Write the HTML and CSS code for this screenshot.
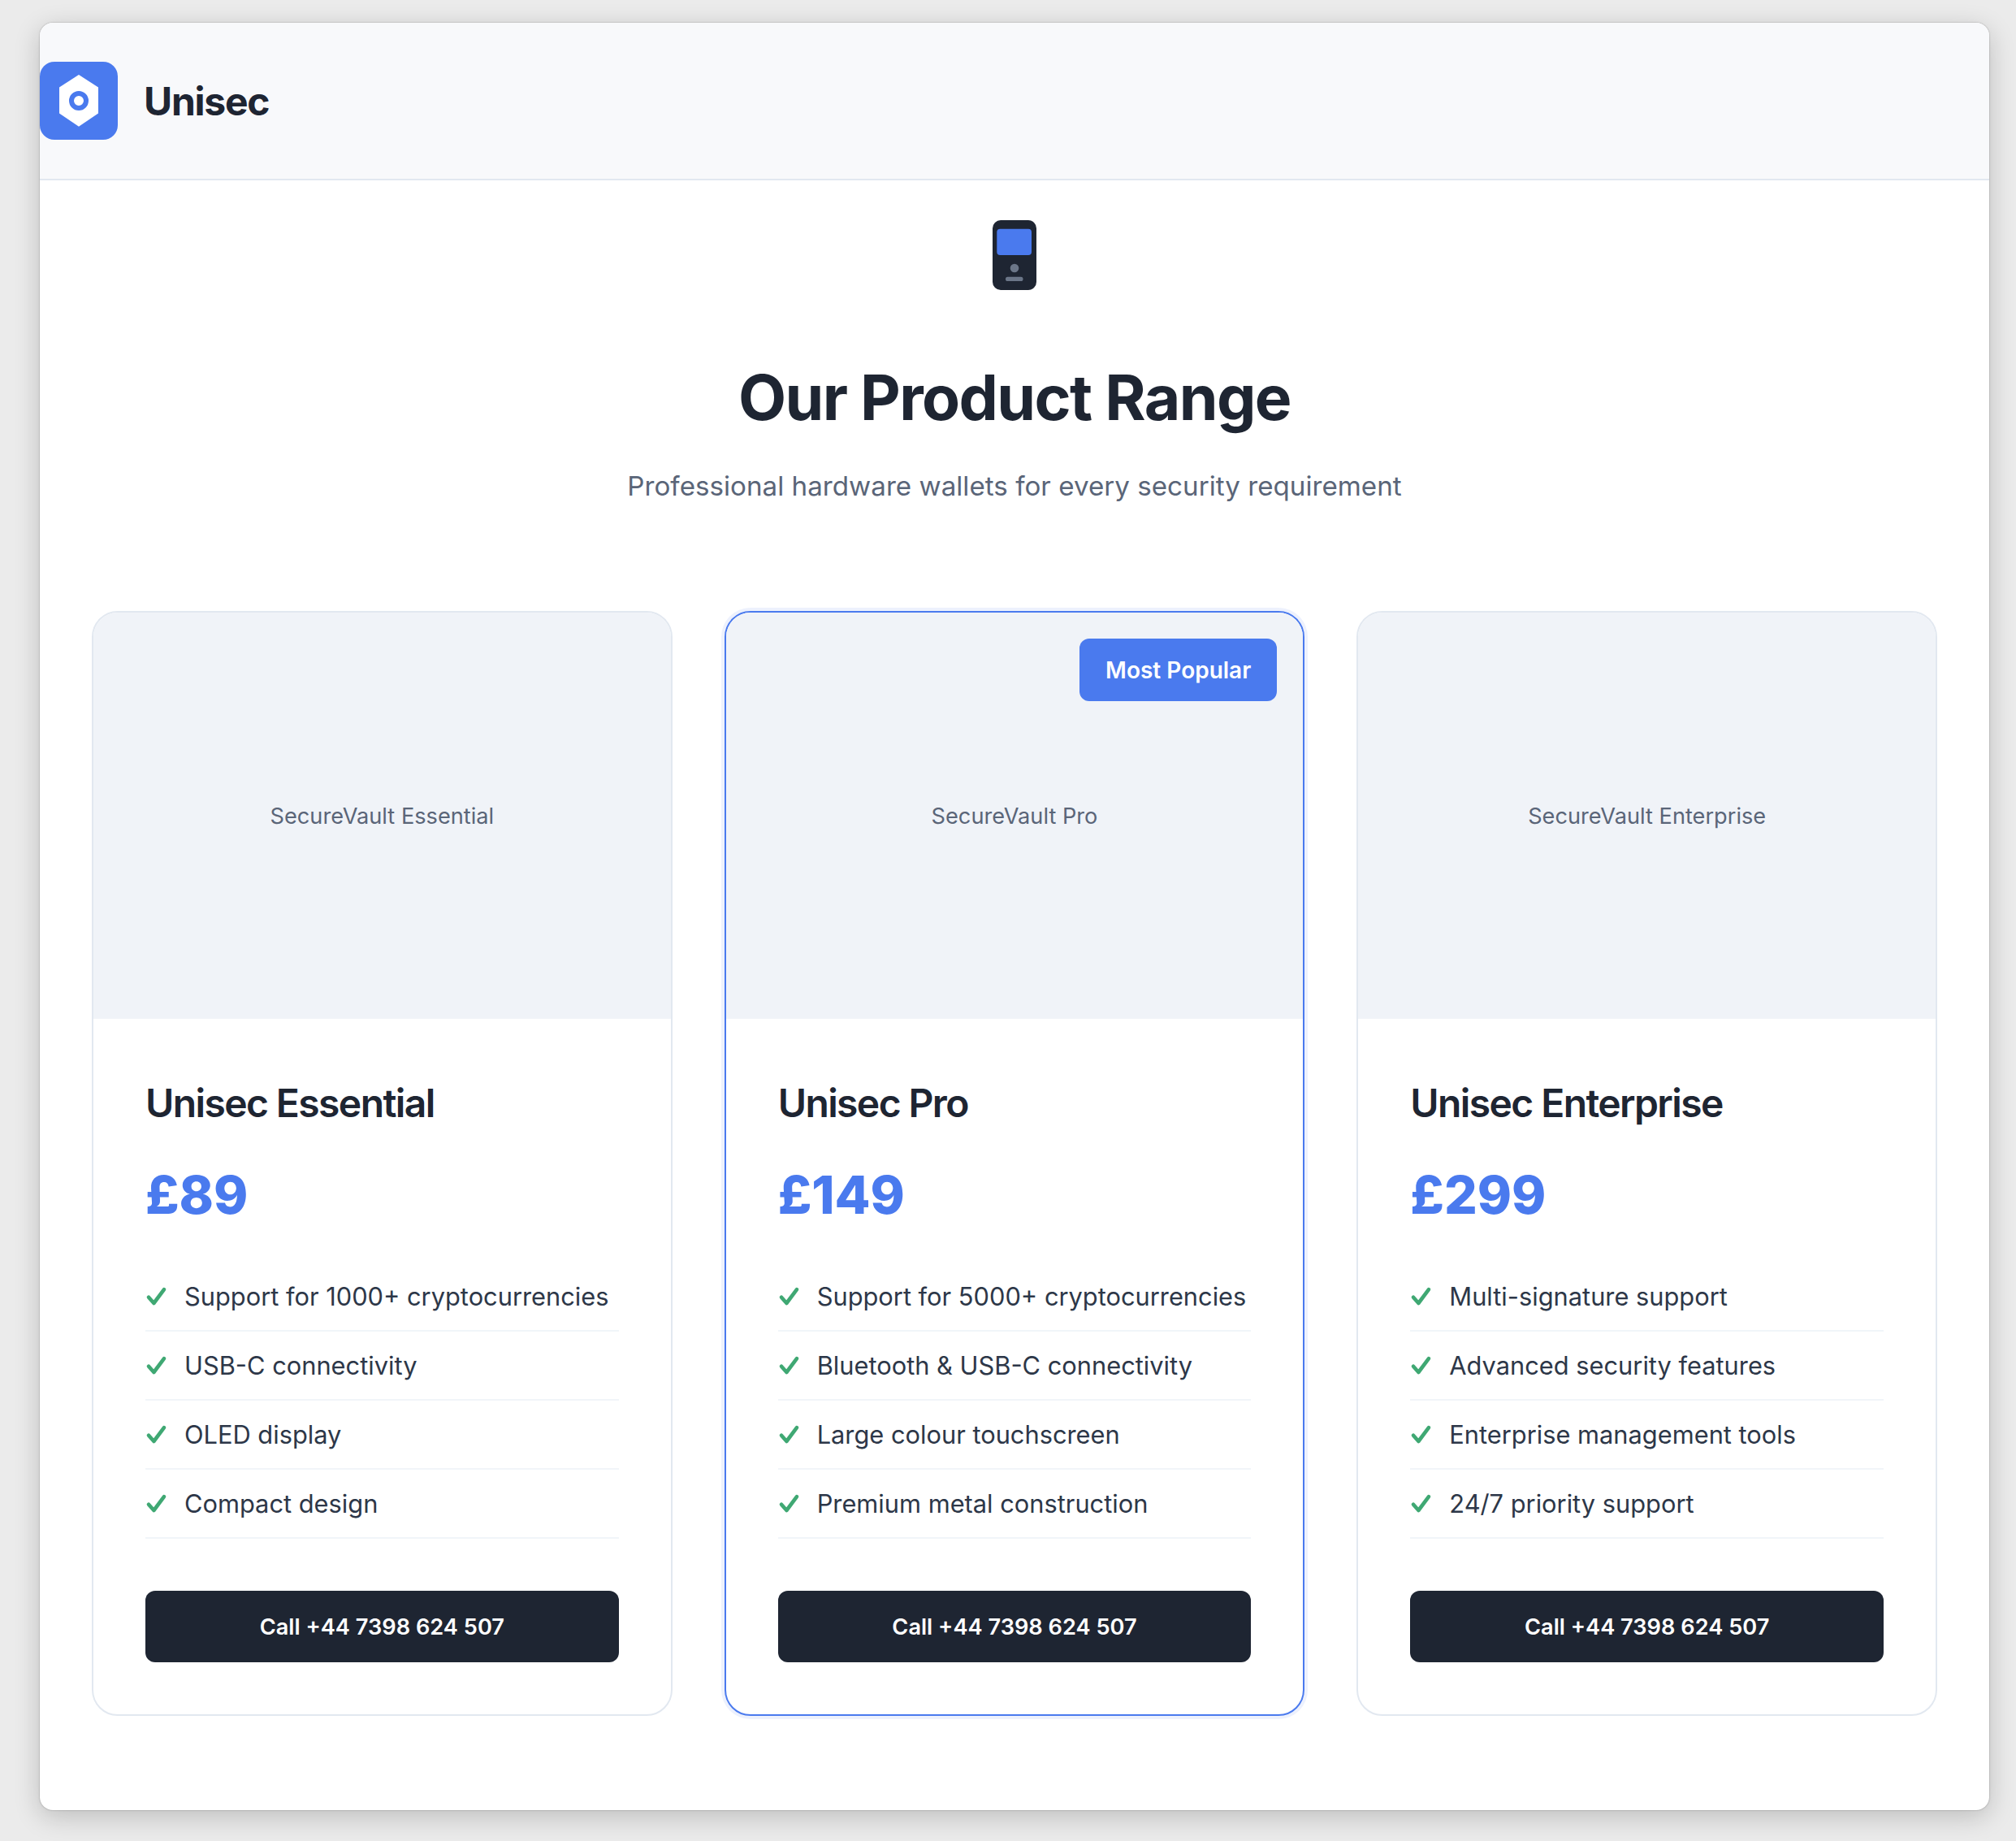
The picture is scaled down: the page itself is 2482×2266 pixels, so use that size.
FILE: index.html
```html
<!DOCTYPE html>
<html lang="en">
<head>
    <meta charset="UTF-8">
    <meta name="viewport" content="width=device-width, initial-scale=1.0">
    <title>Unisec - Our Product Range</title>
    <link rel="stylesheet" href="styles.css">
</head>
<body>
    <svg class="sprites" width="0" height="0" aria-hidden="true">
        <symbol id="tick" viewBox="0 0 24 24" overflow="visible">
            <path d="M4 12.8 L10.4 20 L23 3.2" fill="none" stroke="#3fa873" stroke-width="4.6" stroke-linecap="round" stroke-linejoin="round"/>
        </symbol>
    </svg>

    <div class="window">
        <header class="topbar">
            <div class="logo">
                <svg width="96" height="96" viewBox="0 0 96 96">
                    <path d="M48 16 L72 31.5 V63.5 L48 79.7 L24 63.5 V31.5 Z" fill="#fff"/>
                    <circle cx="48" cy="48" r="9" fill="none" stroke="#4a7aee" stroke-width="6"/>
                </svg>
            </div>
            <div class="brand">Unisec</div>
        </header>

        <main class="content">
            <section class="hero">
                <svg class="device" width="54" height="86" viewBox="0 0 54 86">
                    <rect width="54" height="86" rx="10" fill="#1e2532"/>
                    <rect x="5.3" y="10.7" width="42.7" height="32.3" rx="4" fill="#4a7aee"/>
                    <circle cx="27" cy="59" r="5.3" fill="#6b7688"/>
                    <rect x="16" y="69.7" width="21.5" height="5.3" rx="2.6" fill="#6b7688"/>
                </svg>
                <h1>Our Product Range</h1>
                <p>Professional hardware wallets for every security requirement</p>
            </section>

            <section class="products">
                <article class="card">
                    <div class="card-image">SecureVault Essential</div>
                    <div class="card-body">
                        <h2>Unisec Essential</h2>
                        <div class="price">£89</div>
                        <ul class="features">
                            <li><svg class="tick"><use href="#tick"/></svg>Support for 1000+ cryptocurrencies</li>
                            <li><svg class="tick"><use href="#tick"/></svg>USB-C connectivity</li>
                            <li><svg class="tick"><use href="#tick"/></svg>OLED display</li>
                            <li><svg class="tick"><use href="#tick"/></svg>Compact design</li>
                        </ul>
                        <a class="call" href="tel:+447398624507">Call +44 7398 624 507</a>
                    </div>
                </article>

                <article class="card featured">
                    <div class="card-image">
                        <span class="badge">Most Popular</span>
                        SecureVault Pro
                    </div>
                    <div class="card-body">
                        <h2>Unisec Pro</h2>
                        <div class="price">£149</div>
                        <ul class="features">
                            <li><svg class="tick"><use href="#tick"/></svg>Support for 5000+ cryptocurrencies</li>
                            <li><svg class="tick"><use href="#tick"/></svg>Bluetooth &amp; USB-C connectivity</li>
                            <li><svg class="tick"><use href="#tick"/></svg>Large colour touchscreen</li>
                            <li><svg class="tick"><use href="#tick"/></svg>Premium metal construction</li>
                        </ul>
                        <a class="call" href="tel:+447398624507">Call +44 7398 624 507</a>
                    </div>
                </article>

                <article class="card">
                    <div class="card-image">SecureVault Enterprise</div>
                    <div class="card-body">
                        <h2>Unisec Enterprise</h2>
                        <div class="price">£299</div>
                        <ul class="features">
                            <li><svg class="tick"><use href="#tick"/></svg>Multi-signature support</li>
                            <li><svg class="tick"><use href="#tick"/></svg>Advanced security features</li>
                            <li><svg class="tick"><use href="#tick"/></svg>Enterprise management tools</li>
                            <li><svg class="tick"><use href="#tick"/></svg>24/7 priority support</li>
                        </ul>
                        <a class="call" href="tel:+447398624507">Call +44 7398 624 507</a>
                    </div>
                </article>
            </section>
        </main>
    </div>
</body>
</html>
```
FILE: styles.css
```css
* {
    box-sizing: border-box;
}
html, body {
    margin: 0;
    height: 100%;
}
body {
    background-color: #ebebeb;
    color: #1e2532;
    font-family: Inter, "Noto Sans", sans-serif;
    padding: 28px 33px 38px 49px;
    overflow: hidden;
}
.sprites {
    display: block;
    height: 0;
}
.window {
    width: 2400px;
    height: 2200px;
    background-color: #fff;
    border-radius: 16px;
    overflow: hidden;
    box-shadow: 0 0 2px rgba(0, 0, 0, 0.35), 0 8px 32px rgba(0, 0, 0, 0.2);
}
.topbar {
    display: flex;
    align-items: center;
    gap: 32px;
    height: 194px;
    background-color: #f8f9fb;
    border-bottom: 2px solid #e2e8f0;
}
.logo {
    width: 96px;
    height: 96px;
    border-radius: 18px;
    background-color: #4a7aee;
}
.logo svg {
    display: block;
}
.brand {
    font-size: 48px;
    font-weight: 700;
    letter-spacing: -1.25px;
}
.content {
    padding: 49px 64px 0;
}
.hero {
    text-align: center;
}
.device {
    display: block;
    margin: 0 auto;
}
.hero h1 {
    font-size: 76.8px;
    font-weight: 700;
    letter-spacing: -1.6px;
    line-height: 88px;
    margin: 89px 0 0;
}
.hero p {
    font-size: 33.2px;
    line-height: 48px;
    color: #5a6578;
    margin: 40px 0 0;
}
.products {
    display: grid;
    grid-template-columns: repeat(3, 1fr);
    gap: 64px;
    margin-top: 130px;
}
.card {
    position: relative;
    height: 1360px;
    border: 2px solid #e2e8f0;
    border-radius: 32px;
    overflow: hidden;
    background-color: #fff;
}
.card.featured {
    border-color: #4a7aee;
    box-shadow: 0 0 0 4px rgba(74, 122, 238, 0.1);
    overflow: visible;
}
.card.featured .card-image {
    border-radius: 30px 30px 0 0;
}
.card-image {
    height: 500px;
    display: flex;
    align-items: center;
    justify-content: center;
    background-color: #f0f3f8;
    color: #5a6578;
    font-size: 27.2px;
}
.badge {
    position: absolute;
    top: 32px;
    right: 32px;
    padding: 0 32px;
    height: 77px;
    line-height: 79px;
    border-radius: 12px;
    background-color: #4a7aee;
    color: #fff;
    font-size: 28px;
    font-weight: 600;
}
.card-body {
    padding: 64px 64px 0;
}
.card-body h2 {
    font-size: 48px;
    font-weight: 600;
    line-height: 80px;
    letter-spacing: -1.6px;
    margin: 0;
}
.price {
    font-size: 64px;
    font-weight: 800;
    line-height: 80px;
    color: #4a7aee;
    margin-top: 33px;
}
.features {
    list-style: none;
    margin: 43px 0 0;
    padding: 0;
}
.features li {
    display: flex;
    align-items: center;
    gap: 24px;
    height: 85px;
    font-size: 30.8px;
    color: #2d3748;
    border-bottom: 2px solid #f1f5f9;
}
.tick {
    width: 24px;
    height: 24px;
    flex-shrink: 0;
    overflow: visible;
}
.call {
    display: block;
    height: 88px;
    line-height: 90px;
    margin-top: 64px;
    border-radius: 12px;
    background-color: #1e2532;
    color: #fff;
    font-size: 27.2px;
    font-weight: 600;
    text-align: center;
    text-decoration: none;
}
```
